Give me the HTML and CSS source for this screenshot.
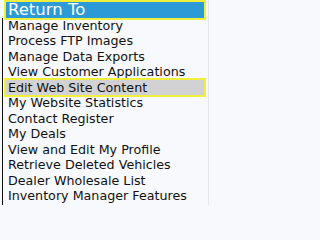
FILE: index.html
```html
<!DOCTYPE html>
<html>
<head>
<meta charset="utf-8">
<link rel="stylesheet" href="styles.css">
</head>
<body>
<div class="menu">
  <div class="item item-active">Return To</div>
  <div class="list">
    <div class="item">Manage Inventory</div>
    <div class="item">Process FTP Images</div>
    <div class="item">Manage Data Exports</div>
    <div class="item">View Customer Applications</div>
    <div class="item item-hover">Edit Web Site Content</div>
    <div class="item">My Website Statistics</div>
    <div class="item">Contact Register</div>
    <div class="item">My Deals</div>
    <div class="item">View and Edit My Profile</div>
    <div class="item">Retrieve Deleted Vehicles</div>
    <div class="item">Dealer Wholesale List</div>
    <div class="item">Inventory Manager Features</div>
  </div>
</div>
</body>
</html>
```
FILE: styles.css
```css
html, body {
  margin: 0;
  padding: 0;
  background: #f7f9fd;
}
body {
  width: 209px;
  height: 205px;
  overflow: hidden;
  border-right: 1px solid #e4e6ea;
  box-sizing: border-box;
}
.menu {
  padding-top: 2.25px;
  font-family: "DejaVu Sans", Verdana, sans-serif;
  font-size: 12.7px;
  color: #111;
}
.list {
  margin-left: 2px;
  border-left: 1px solid #111;
  min-height: 190px;
}
.item {
  height: 15.5px;
  line-height: 15.5px;
  padding-left: 5px;
  white-space: nowrap;
}
.item-active,
.item-hover {
  margin-right: 4px;
  padding-left: 2px;
  box-shadow: 0 0 0 2px #f0f03c;
  position: relative;
}
.item-active {
  margin-left: 6px;
  background: #2b9ad7;
  color: #fff;
  font-size: 16.5px;
  line-height: 16px;
}
.item-hover {
  margin-left: 3px;
  background: #d2d2d4;
}
```
